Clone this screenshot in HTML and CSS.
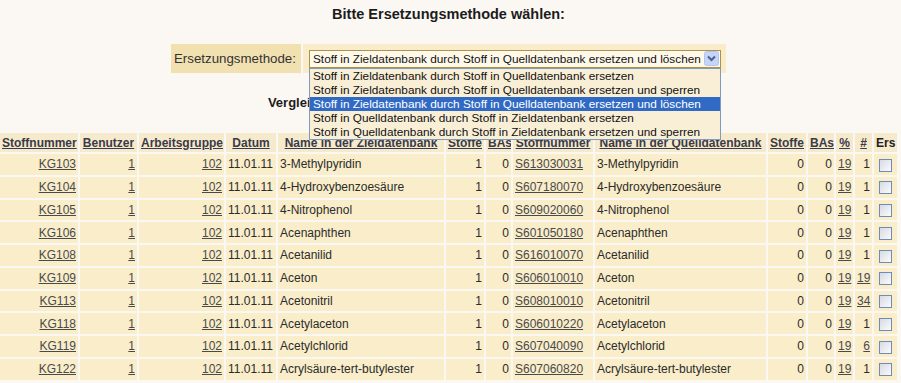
FILE: index.html
```html
<!DOCTYPE html>
<html lang="de">

<head>
    <meta charset="UTF-8">
    <title>Ersetzungsmethode</title>
    <link rel="stylesheet" href="styles.css">
</head>

<body>
    <div class="page">
        <h1 class="title">Bitte Ersetzungsmethode wählen:</h1>

        <table class="method">
            <tr>
                <td class="label">Ersetzungsmethode:</td>
                <td class="field">
                    <div class="select">
                        <span class="value">Stoff in Zieldatenbank durch Stoff in Quelldatenbank ersetzen und löschen</span>
                        <span class="arrow">
                            <svg width="15" height="15" viewBox="0 0 15 15">
                                <rect x="0.5" y="0.5" width="14" height="14" rx="2" fill="#c4d4fb" stroke="#b3c6ef" />
                                <path d="M4 5.5 L7.5 9 L11 5.5" fill="none" stroke="#4d6185" stroke-width="2" />
                            </svg>
                        </span>
                        <div class="options">
                            <div class="option">Stoff in Zieldatenbank durch Stoff in Quelldatenbank ersetzen</div>
                            <div class="option">Stoff in Zieldatenbank durch Stoff in Quelldatenbank ersetzen und sperren</div>
                            <div class="option selected">Stoff in Zieldatenbank durch Stoff in Quelldatenbank ersetzen und löschen</div>
                            <div class="option">Stoff in Quelldatenbank durch Stoff in Zieldatenbank ersetzen</div>
                            <div class="option">Stoff in Quelldatenbank durch Stoff in Zieldatenbank ersetzen und sperren</div>
                        </div>
                    </div>
                </td>
            </tr>
        </table>

        <h2 class="subtitle">Vergleich der Stoffe in Zieldatenbank und Quelldatenbank:</h2>

        <table class="list">
            <colgroup>
                <col class="c-nr">
                <col class="c-user">
                <col class="c-group">
                <col class="c-date">
                <col class="c-name">
                <col class="c-stoffe">
                <col class="c-bas">
                <col class="c-nr2">
                <col class="c-name2">
                <col class="c-stoffe">
                <col class="c-bas2">
                <col class="c-pct">
                <col class="c-cnt">
                <col class="c-ers">
            </colgroup>
            <thead>
                <tr>
                    <th><a href="#">Stoffnummer</a></th>
                    <th><a href="#">Benutzer</a></th>
                    <th><a href="#">Arbeitsgruppe</a></th>
                    <th><a href="#">Datum</a></th>
                    <th><a href="#">Name in der Zieldatenbank</a></th>
                    <th><a href="#">Stoffe</a></th>
                    <th><a href="#">BAs</a></th>
                    <th><a href="#">Stoffnummer</a></th>
                    <th><a href="#">Name in der Quelldatenbank</a></th>
                    <th><a href="#">Stoffe</a></th>
                    <th><a href="#">BAs</a></th>
                    <th><a href="#">%</a></th>
                    <th><a href="#">#</a></th>
                    <th>Ers</th>
                </tr>
            </thead>
            <tbody>
                <tr>
                    <td class="r"><a href="#">KG103</a></td>
                    <td class="r"><a href="#">1</a></td>
                    <td class="r"><a href="#">102</a></td>
                    <td>11.01.11</td>
                    <td>3-Methylpyridin</td>
                    <td class="r">1</td>
                    <td class="r">0</td>
                    <td><a href="#">S613030031</a></td>
                    <td>3-Methylpyridin</td>
                    <td class="r">0</td>
                    <td class="r">0</td>
                    <td><a href="#">19</a></td>
                    <td class="r">1</td>
                    <td class="c"><span class="check"></span></td>
                </tr>
                <tr>
                    <td class="r"><a href="#">KG104</a></td>
                    <td class="r"><a href="#">1</a></td>
                    <td class="r"><a href="#">102</a></td>
                    <td>11.01.11</td>
                    <td>4-Hydroxybenzoesäure</td>
                    <td class="r">1</td>
                    <td class="r">0</td>
                    <td><a href="#">S607180070</a></td>
                    <td>4-Hydroxybenzoesäure</td>
                    <td class="r">0</td>
                    <td class="r">0</td>
                    <td><a href="#">19</a></td>
                    <td class="r">1</td>
                    <td class="c"><span class="check"></span></td>
                </tr>
                <tr>
                    <td class="r"><a href="#">KG105</a></td>
                    <td class="r"><a href="#">1</a></td>
                    <td class="r"><a href="#">102</a></td>
                    <td>11.01.11</td>
                    <td>4-Nitrophenol</td>
                    <td class="r">1</td>
                    <td class="r">0</td>
                    <td><a href="#">S609020060</a></td>
                    <td>4-Nitrophenol</td>
                    <td class="r">0</td>
                    <td class="r">0</td>
                    <td><a href="#">19</a></td>
                    <td class="r">1</td>
                    <td class="c"><span class="check"></span></td>
                </tr>
                <tr>
                    <td class="r"><a href="#">KG106</a></td>
                    <td class="r"><a href="#">1</a></td>
                    <td class="r"><a href="#">102</a></td>
                    <td>11.01.11</td>
                    <td>Acenaphthen</td>
                    <td class="r">1</td>
                    <td class="r">0</td>
                    <td><a href="#">S601050180</a></td>
                    <td>Acenaphthen</td>
                    <td class="r">0</td>
                    <td class="r">0</td>
                    <td><a href="#">19</a></td>
                    <td class="r">1</td>
                    <td class="c"><span class="check"></span></td>
                </tr>
                <tr>
                    <td class="r"><a href="#">KG108</a></td>
                    <td class="r"><a href="#">1</a></td>
                    <td class="r"><a href="#">102</a></td>
                    <td>11.01.11</td>
                    <td>Acetanilid</td>
                    <td class="r">1</td>
                    <td class="r">0</td>
                    <td><a href="#">S616010070</a></td>
                    <td>Acetanilid</td>
                    <td class="r">0</td>
                    <td class="r">0</td>
                    <td><a href="#">19</a></td>
                    <td class="r">1</td>
                    <td class="c"><span class="check"></span></td>
                </tr>
                <tr>
                    <td class="r"><a href="#">KG109</a></td>
                    <td class="r"><a href="#">1</a></td>
                    <td class="r"><a href="#">102</a></td>
                    <td>11.01.11</td>
                    <td>Aceton</td>
                    <td class="r">1</td>
                    <td class="r">0</td>
                    <td><a href="#">S606010010</a></td>
                    <td>Aceton</td>
                    <td class="r">0</td>
                    <td class="r">0</td>
                    <td><a href="#">19</a></td>
                    <td class="r"><a href="#">19</a></td>
                    <td class="c"><span class="check"></span></td>
                </tr>
                <tr>
                    <td class="r"><a href="#">KG113</a></td>
                    <td class="r"><a href="#">1</a></td>
                    <td class="r"><a href="#">102</a></td>
                    <td>11.01.11</td>
                    <td>Acetonitril</td>
                    <td class="r">1</td>
                    <td class="r">0</td>
                    <td><a href="#">S608010010</a></td>
                    <td>Acetonitril</td>
                    <td class="r">0</td>
                    <td class="r">0</td>
                    <td><a href="#">19</a></td>
                    <td class="r"><a href="#">34</a></td>
                    <td class="c"><span class="check"></span></td>
                </tr>
                <tr>
                    <td class="r"><a href="#">KG118</a></td>
                    <td class="r"><a href="#">1</a></td>
                    <td class="r"><a href="#">102</a></td>
                    <td>11.01.11</td>
                    <td>Acetylaceton</td>
                    <td class="r">1</td>
                    <td class="r">0</td>
                    <td><a href="#">S606010220</a></td>
                    <td>Acetylaceton</td>
                    <td class="r">0</td>
                    <td class="r">0</td>
                    <td><a href="#">19</a></td>
                    <td class="r">1</td>
                    <td class="c"><span class="check"></span></td>
                </tr>
                <tr>
                    <td class="r"><a href="#">KG119</a></td>
                    <td class="r"><a href="#">1</a></td>
                    <td class="r"><a href="#">102</a></td>
                    <td>11.01.11</td>
                    <td>Acetylchlorid</td>
                    <td class="r">1</td>
                    <td class="r">0</td>
                    <td><a href="#">S607040090</a></td>
                    <td>Acetylchlorid</td>
                    <td class="r">0</td>
                    <td class="r">0</td>
                    <td><a href="#">19</a></td>
                    <td class="r"><a href="#">6</a></td>
                    <td class="c"><span class="check"></span></td>
                </tr>
                <tr>
                    <td class="r"><a href="#">KG122</a></td>
                    <td class="r"><a href="#">1</a></td>
                    <td class="r"><a href="#">102</a></td>
                    <td>11.01.11</td>
                    <td>Acrylsäure-tert-butylester</td>
                    <td class="r">1</td>
                    <td class="r">0</td>
                    <td><a href="#">S607060820</a></td>
                    <td>Acrylsäure-tert-butylester</td>
                    <td class="r">0</td>
                    <td class="r">0</td>
                    <td><a href="#">19</a></td>
                    <td class="r">1</td>
                    <td class="c"><span class="check"></span></td>
                </tr>
            </tbody>
        </table>
    </div>
</body>

</html>
```

FILE: styles.css
```css
* {
    box-sizing: border-box;
}

body {
    margin: 0;
    background: #fbf8f3;
    font-family: "Liberation Sans", Arial, sans-serif;
    font-size: 12px;
    color: #2b2b2b;
    overflow: hidden;
}

.page {
    width: 897px;
}

.title {
    margin: 0;
    padding-top: 6px;
    font-size: 14.5px;
    line-height: 17px;
    text-align: center;
    color: #1c1c1c;
}

/* Auswahl der Methode */
.method {
    margin: 19px auto 0;
    border-spacing: 2px;
}

.method td {
    height: 29px;
    padding: 0;
}

.method .label {
    width: 130px;
    padding-left: 3px;
    background: #f1e1b0;
    font-size: 13.3px;
    color: #333;
}

.method .field {
    width: 423px;
    padding: 0 5px 0 6px;
    background: #f8ecca;
}

.select {
    position: relative;
    height: 18px;
    border: 1px solid #b0914c;
    background: #fff9ea;
    font-size: 11.8px;
    line-height: 16px;
    color: #111;
}

.select .value {
    padding-left: 3px;
    white-space: nowrap;
}

.select .arrow {
    position: absolute;
    right: 1px;
    top: 0;
    height: 16px;
    line-height: 0;
}

.options {
    position: absolute;
    z-index: 2;
    left: -1px;
    right: -1px;
    top: 17px;
    border: 1px solid #7f9db9;
    background: #f9efd7;
}

.option {
    height: 14px;
    line-height: 14px;
    padding-left: 3px;
    white-space: nowrap;
}

.option.selected {
    background: #316ac5;
    color: #fff;
}

.subtitle {
    margin: 20px 0 0;
    font-size: 13px;
    line-height: 16px;
    text-align: center;
    color: #1c1c1c;
}

/* Vergleichsliste */
.list {
    width: 901px;
    margin: 20px 0 0 -2px;
    table-layout: fixed;
    border-spacing: 2px;
}

.c-nr { width: 78px; }
.c-user { width: 57px; }
.c-group { width: 85px; }
.c-date { width: 50px; }
.c-name { width: 166px; }
.c-stoffe { width: 38px; }
.c-bas { width: 25px; }
.c-nr2 { width: 80px; }
.c-name2 { width: 171px; }
.c-bas2 { width: 26px; }
.c-pct { width: 17px; }
.c-cnt { width: 17px; }
.c-ers { width: 23px; }

.list th,
.list td {
    padding: 0 2px;
    white-space: nowrap;
    overflow: hidden;
}

.list th {
    height: 19px;
    background: #f6eacc;
    color: #222;
    text-align: center;
}

.list td {
    height: 20.75px;
    background: #f9edca;
    text-align: left;
}

.list a {
    color: #3a3a4a;
}

.list td a {
    color: #4a4a4a;
}

.list td.r {
    text-align: right;
}

.list td.c {
    text-align: center;
    padding: 0;
}

.check {
    display: inline-block;
    width: 13px;
    height: 13px;
    vertical-align: middle;
    border: 1px solid #6f8cb4;
    background: linear-gradient(135deg, #d5dae3, #fbfbfb);
}
```
